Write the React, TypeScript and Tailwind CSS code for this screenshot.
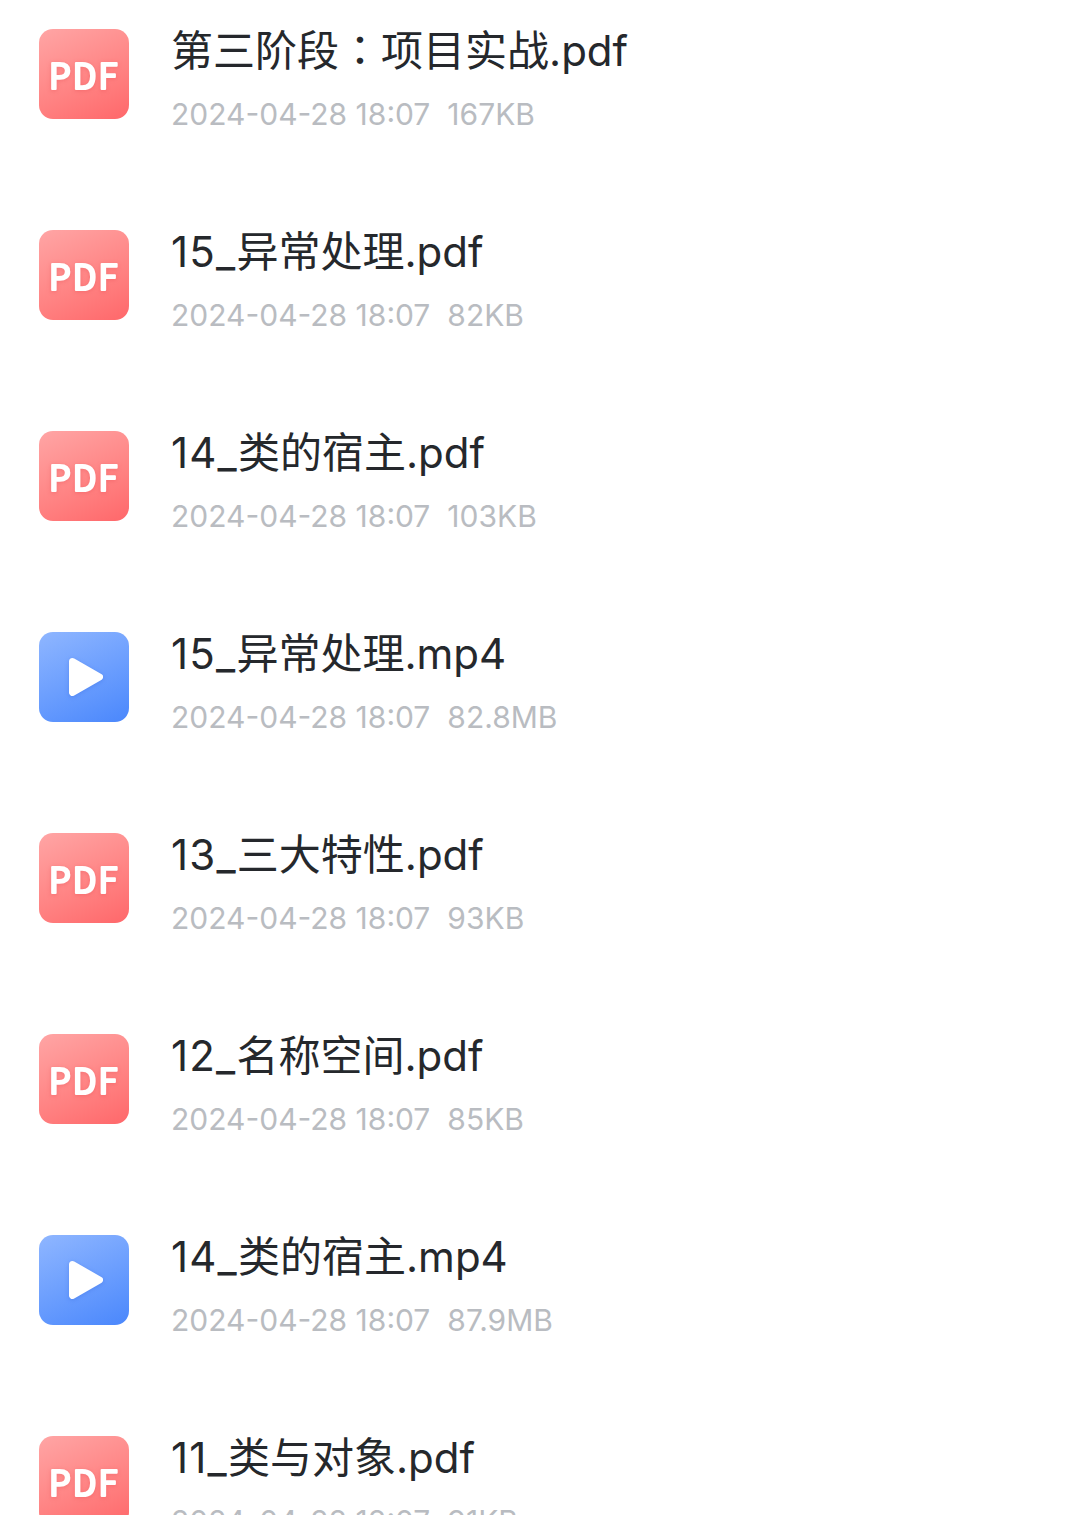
type FileProps = {
  prefix?: string;
  name: string;
  date: string;
  size: string;
  type: "pdf" | "video";
};

const files: FileProps[] = [
  { name: "第三阶段：项目实战.pdf", date: "2024-04-28 18:07", size: "167KB", type: "pdf" },
  { prefix: "15_", name: "异常处理.pdf", date: "2024-04-28 18:07", size: "82KB", type: "pdf" },
  { prefix: "14_", name: "类的宿主.pdf", date: "2024-04-28 18:07", size: "103KB", type: "pdf" },
  { prefix: "15_", name: "异常处理.mp4", date: "2024-04-28 18:07", size: "82.8MB", type: "video" },
  { prefix: "13_", name: "三大特性.pdf", date: "2024-04-28 18:07", size: "93KB", type: "pdf" },
  { prefix: "12_", name: "名称空间.pdf", date: "2024-04-28 18:07", size: "85KB", type: "pdf" },
  { prefix: "14_", name: "类的宿主.mp4", date: "2024-04-28 18:07", size: "87.9MB", type: "video" },
  { prefix: "11_", name: "类与对象.pdf", date: "2024-04-28 18:07", size: "91KB", type: "pdf" },
];

const PdfIcon = () => (
  <div className="w-[90px] h-[90px] shrink-0 rounded-[14px] bg-linear-155 from-[#ffa5a5] to-[#ff676a]">
    <svg viewBox="0 0 90 90" className="w-full h-full drop-shadow-[0_1px_2px_rgba(225,70,75,0.35)]">
      <text
        x="45"
        y="59.600"
        textAnchor="middle"
        fill="white"
        stroke="white"
        strokeWidth="2.200"
        strokeLinejoin="round"
        className="font-['Noto_Sans_CJK_SC'] text-[35px] font-normal tracking-[1.600px]"
      >
        PDF
      </text>
    </svg>
  </div>
);

const VideoIcon = () => (
  <div className="w-[90px] h-[90px] shrink-0 rounded-[14px] bg-linear-155 from-[#8fb6ff] to-[#4a87fc]">
    <svg viewBox="0 0 90 90" className="w-full h-full drop-shadow-[0_1px_2px_rgba(50,100,220,0.35)]">
      <path d="M33.500 29.500 L60.500 45 L33.500 60.500 Z" fill="white" stroke="white" strokeWidth="7" strokeLinejoin="round" />
    </svg>
  </div>
);

// the full-width colon sits in the middle of its box
const FileName = ({ name }: { name: string }) => {
  const [first, rest] = name.split("：");
  if (!rest) return <>{name}</>;
  return (
    <>
      {first}
      <span className="font-['Noto_Sans_CJK_TC'] leading-none" lang="zh-TW">：</span>
      {rest}
    </>
  );
};

const FileRow = ({ prefix, name, date, size, type }: FileProps) => (
  <div className="flex h-[201px] shrink-0 pt-[29px] pl-[39px]">
    {type === "pdf" ? <PdfIcon /> : <VideoIcon />}
    <div className="ml-[42px] -mt-[10px]">
      <h2 className="text-[42px] leading-[64px] whitespace-nowrap text-[#25282c]">
        {prefix && <span className="tracking-[1.200px]">{prefix}</span>}
        <FileName name={name} />
      </h2>
      <p className="text-[30px] leading-[62px] whitespace-pre text-[#b9bcc1]">
        {date}
        <span className="ml-[17px]">{size}</span>
      </p>
    </div>
  </div>
);

const App = () => {
  return (
    <div className="flex flex-col h-screen overflow-hidden bg-white font-[Inter,'Noto_Sans_CJK_SC',sans-serif]">
      {files.map((file, i) => (
        <FileRow key={i} {...file} />
      ))}
    </div>
  );
};

export default App;
